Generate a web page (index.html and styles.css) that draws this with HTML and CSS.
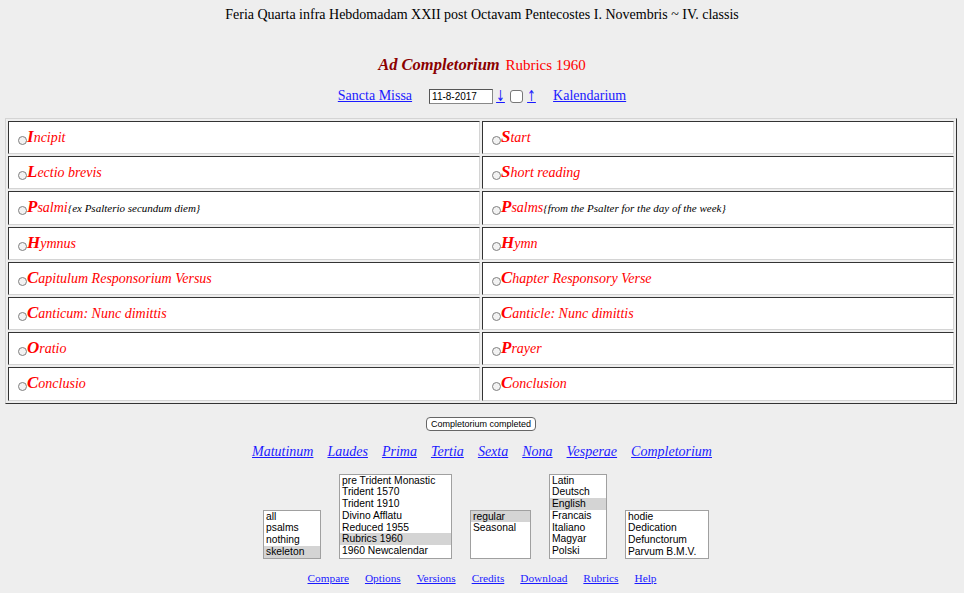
FILE: index.html
```html
<!DOCTYPE html>
<html>
<head>
<meta charset="utf-8">
<link rel="stylesheet" href="styles.css">
</head>
<body>
<div class="page">
  <div class="title">Feria Quarta infra Hebdomadam XXII post Octavam Pentecostes I. Novembris ~ IV. classis</div>
  <div class="heading"><span class="hour">Ad Completorium</span> <span class="rubric">Rubrics 1960</span></div>
  <div class="toolbar">
    <a href="#" class="link">Sancta Missa</a>
    <span class="datebox">
      <span class="dateinput">11-8-2017</span>
      <a href="#" class="arrow down">↓</a>
      <span class="checkbox"></span>
      <a href="#" class="arrow up">↑</a>
    </span>
    <a href="#" class="link">Kalendarium</a>
  </div>
  <div class="tablewrap">
    <table class="office">
      <tr>
        <td><span class="radio"></span><span class="item"><b>I</b>ncipit</span></td>
        <td><span class="radio"></span><span class="item"><b>S</b>tart</span></td>
      </tr>
      <tr>
        <td><span class="radio"></span><span class="item"><b>L</b>ectio brevis</span></td>
        <td><span class="radio"></span><span class="item"><b>S</b>hort reading</span></td>
      </tr>
      <tr>
        <td><span class="radio"></span><span class="item"><b>P</b>salmi</span><span class="note">{ex Psalterio secundum diem}</span></td>
        <td><span class="radio"></span><span class="item"><b>P</b>salms</span><span class="note">{from the Psalter for the day of the week}</span></td>
      </tr>
      <tr>
        <td><span class="radio"></span><span class="item"><b>H</b>ymnus</span></td>
        <td><span class="radio"></span><span class="item"><b>H</b>ymn</span></td>
      </tr>
      <tr>
        <td><span class="radio"></span><span class="item"><b>C</b>apitulum Responsorium Versus</span></td>
        <td><span class="radio"></span><span class="item"><b>C</b>hapter Responsory Verse</span></td>
      </tr>
      <tr>
        <td><span class="radio"></span><span class="item"><b>C</b>anticum: Nunc dimittis</span></td>
        <td><span class="radio"></span><span class="item"><b>C</b>anticle: Nunc dimittis</span></td>
      </tr>
      <tr>
        <td><span class="radio"></span><span class="item"><b>O</b>ratio</span></td>
        <td><span class="radio"></span><span class="item"><b>P</b>rayer</span></td>
      </tr>
      <tr>
        <td><span class="radio"></span><span class="item"><b>C</b>onclusio</span></td>
        <td><span class="radio"></span><span class="item"><b>C</b>onclusion</span></td>
      </tr>
    </table>
  </div>
  <div class="buttonrow"><span class="button">Completorium completed</span></div>
  <div class="hours">
    <a href="#">Matutinum</a>
    <a href="#">Laudes</a>
    <a href="#">Prima</a>
    <a href="#">Tertia</a>
    <a href="#">Sexta</a>
    <a href="#">Nona</a>
    <a href="#">Vesperae</a>
    <a href="#">Completorium</a>
  </div>
  <div class="selects">
    <div class="listbox short w1">
      <div class="opt">all</div>
      <div class="opt">psalms</div>
      <div class="opt">nothing</div>
      <div class="opt sel">skeleton</div>
    </div>
    <div class="listbox tall w2">
      <div class="opt">pre Trident Monastic</div>
      <div class="opt">Trident 1570</div>
      <div class="opt">Trident 1910</div>
      <div class="opt">Divino Afflatu</div>
      <div class="opt">Reduced 1955</div>
      <div class="opt sel">Rubrics 1960</div>
      <div class="opt">1960 Newcalendar</div>
    </div>
    <div class="listbox short w3">
      <div class="opt sel">regular</div>
      <div class="opt">Seasonal</div>
    </div>
    <div class="listbox tall w4">
      <div class="opt">Latin</div>
      <div class="opt">Deutsch</div>
      <div class="opt sel">English</div>
      <div class="opt">Francais</div>
      <div class="opt">Italiano</div>
      <div class="opt">Magyar</div>
      <div class="opt">Polski</div>
    </div>
    <div class="listbox short w5">
      <div class="opt">hodie</div>
      <div class="opt">Dedication</div>
      <div class="opt">Defunctorum</div>
      <div class="opt">Parvum B.M.V.</div>
    </div>
  </div>
  <div class="footer">
    <a href="#">Compare</a>
    <a href="#">Options</a>
    <a href="#">Versions</a>
    <a href="#">Credits</a>
    <a href="#">Download</a>
    <a href="#">Rubrics</a>
    <a href="#">Help</a>
  </div>
</div>
</body>
</html>
```

FILE: styles.css
```css
html, body {
  margin: 0;
  padding: 0;
  background: #eeeeee;
}
body {
  font-family: "Liberation Serif", "Times New Roman", serif;
  color: #000;
}
.page {
  padding-top: 6px;
}
.title {
  text-align: center;
  font-size: 14px;
  line-height: 18px;
}
.heading {
  margin-top: 32px;
  text-align: center;
  font-size: 15px;
  line-height: 18px;
}
.hour {
  color: #8b0000;
  font-weight: bold;
  font-style: italic;
  font-size: 16.5px;
  margin-right: 2px;
}
.rubric {
  color: #ff0000;
}
.toolbar {
  margin-top: 13px;
  height: 18px;
  display: flex;
  justify-content: center;
  align-items: center;
  font-size: 14px;
}
a {
  color: #1a1aff;
  text-decoration: underline;
}
.toolbar .link {
  line-height: 18px;
}
.datebox {
  display: flex;
  align-items: center;
  margin: 0 15px 0 17px;
}
.dateinput {
  box-sizing: border-box;
  width: 64px;
  height: 15px;
  background: #fff;
  border: 1px solid #888;
  border-top-color: #555;
  border-left-color: #555;
  font-family: "Liberation Sans", Arial, sans-serif;
  font-size: 10px;
  line-height: 13px;
  padding-left: 2px;
}
.arrow {
  display: block;
  width: 13px;
  text-align: center;
  font-family: "DejaVu Sans", sans-serif;
  font-size: 15px;
  line-height: 17px;
  transform: scaleX(0.7);
}
.arrow.down {
  margin-left: 1px;
}
.arrow.up {
  margin-left: 2px;
}
.checkbox {
  box-sizing: border-box;
  width: 13px;
  height: 13px;
  border: 1px solid #777;
  border-radius: 3px;
  background: #fff;
  margin-left: 3px;
}
.tablewrap {
  margin-top: 13px;
  padding-left: 5px;
}
.office {
  width: 952px;
  border-collapse: separate;
  border-spacing: 2px;
  border: 1px solid;
  border-color: #d4d4d4 #333 #333 #d4d4d4;
}
.office td {
  width: 50%;
  height: 33.2px;
  box-sizing: border-box;
  background: #fff;
  border: 1px solid;
  border-color: #333 #d4d4d4 #d4d4d4 #333;
  padding: 0 0 1px 8px;
  vertical-align: middle;
  white-space: nowrap;
}
.radio {
  display: inline-block;
  box-sizing: border-box;
  width: 9px;
  height: 9px;
  border: 1px solid #808080;
  border-radius: 50%;
  background: #f2f2f2;
  vertical-align: -3px;
  margin-left: 1px;
}
.item {
  color: #ff0000;
  font-style: italic;
  font-size: 14px;
}
.item b {
  font-size: 17px;
  font-weight: bold;
}
.note {
  font-style: italic;
  font-size: 11px;
  color: #000;
}
.buttonrow {
  margin-top: 13px;
  display: flex;
  justify-content: center;
}
.button {
  box-sizing: border-box;
  height: 14px;
  padding: 0 4px;
  border: 1px solid #666;
  border-radius: 4px;
  background: #fff;
  font-family: "Liberation Sans", Arial, sans-serif;
  font-size: 9px;
  line-height: 12px;
  margin-left: -2px;
}
.hours {
  margin-top: 12px;
  display: flex;
  justify-content: center;
  gap: 14px;
  font-size: 14px;
  line-height: 18px;
  font-style: italic;
}
.selects {
  margin-top: 13px;
  display: flex;
  justify-content: center;
  align-items: flex-end;
  gap: 18px;
  padding-left: 8px;
}
.listbox {
  box-sizing: border-box;
  background: #fff;
  border: 1px solid #a0a0a0;
  font-family: "Liberation Sans", Arial, sans-serif;
  font-size: 10.3px;
}
.listbox.tall { height: 85px; }
.listbox.short { height: 49px; }
.w1 { width: 58px; }
.w2 { width: 113px; }
.w3 { width: 61px; }
.w4 { width: 58px; }
.w5 { width: 84px; }
.opt {
  line-height: 11.8px;
  padding-left: 2px;
  white-space: nowrap;
}
.opt.sel {
  background: #d4d4d4;
}
.footer {
  margin-top: 12px;
  display: flex;
  justify-content: center;
  gap: 16px;
  font-size: 11.3px;
  line-height: 14px;
}
```
